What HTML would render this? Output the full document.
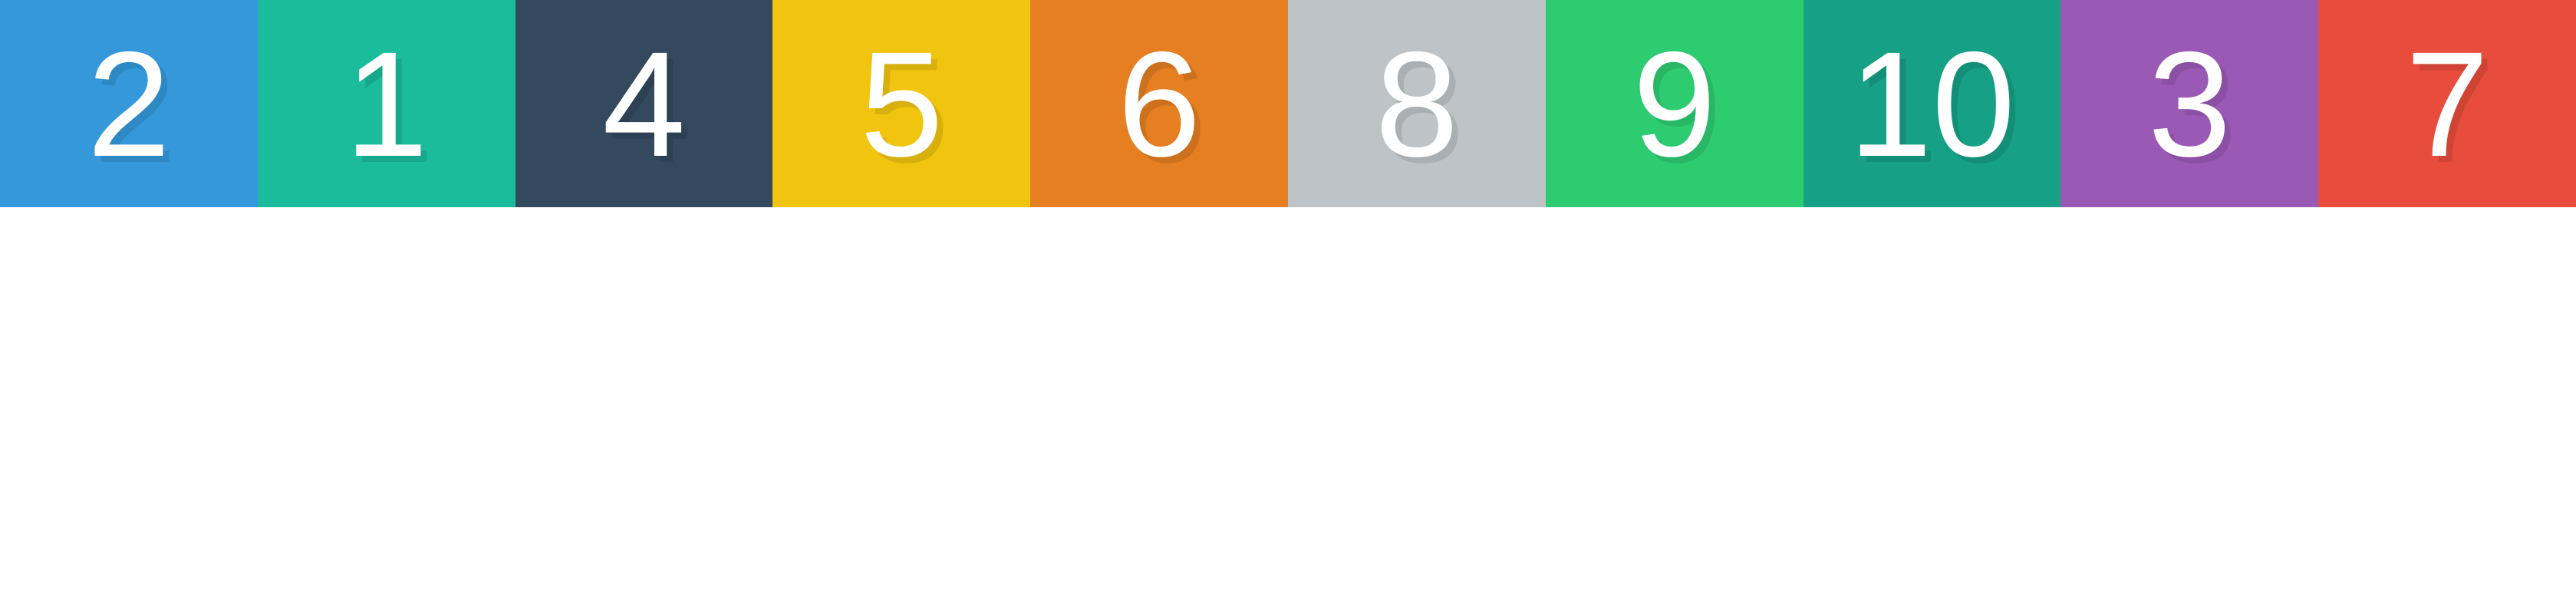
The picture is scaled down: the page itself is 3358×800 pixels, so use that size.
<!DOCTYPE html>
<html><head><style>
html,body{margin:0;padding:0;background:#fff;width:3358px;height:800px;overflow:hidden}
.row{display:flex;width:3358px;height:270px}
.row div{flex:1;display:flex;align-items:center;justify-content:center;color:#fff;font-family:"Liberation Sans",sans-serif;font-size:195px;line-height:1;text-shadow:8px 8px 0 rgba(0,0,0,0.1);padding-top:2px;box-sizing:border-box}
</style></head><body>
<div class="row">
<div style="background:#3498db">2</div>
<div style="background:#1abc9c">1</div>
<div style="background:#34495e">4</div>
<div style="background:#f1c40f">5</div>
<div style="background:#e67e22">6</div>
<div style="background:#bdc3c7">8</div>
<div style="background:#2ecc71">9</div>
<div style="background:#16a085">10</div>
<div style="background:#9b59b6">3</div>
<div style="background:#e74c3c">7</div>
</div>
</body></html>
